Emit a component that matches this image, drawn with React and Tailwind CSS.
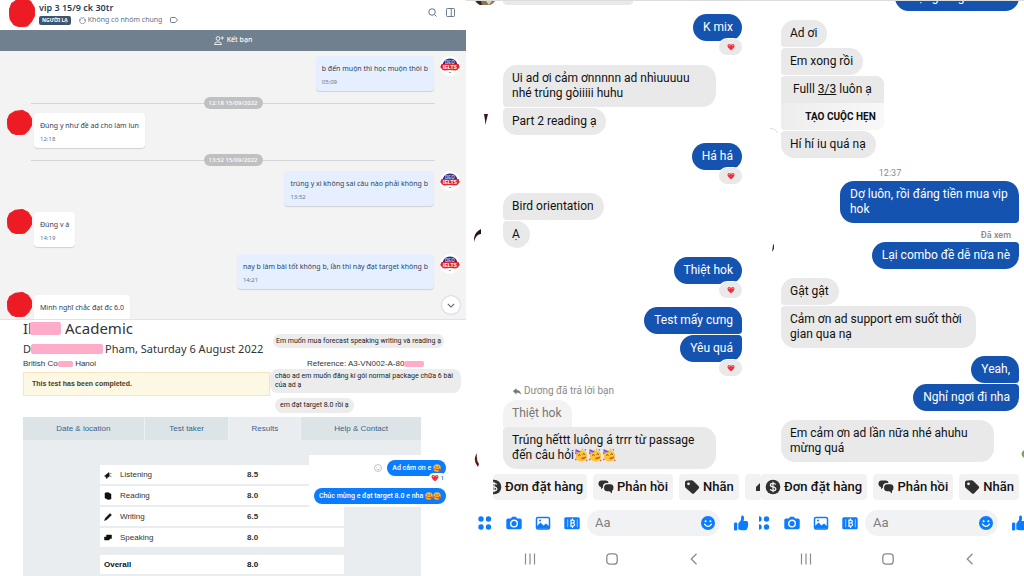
import React from "react";

/* ---------- shared drawings ---------- */

function RedMark({ className }) {
  return (
    <svg viewBox="0 0 24 24" className={className} preserveAspectRatio="none" aria-hidden="true">
      <path d="M8 1.2 L15 .5 L20 3 L23.3 8 L24 14 L21 19 L17 23 L10 24 L4.5 22 L1 17.5 L.2 10 L2.5 4.5 Z" fill="#ed1c24" stroke="#ed1c24" strokeLinejoin="round" />
    </svg>
  );
}

function BrandAvatar() {
  return (
    <svg viewBox="0 0 20 20" className="size-5 shrink-0" aria-hidden="true">
      <circle cx="10" cy="10" r="10" fill="#fff" />
      <path d="M2.500 8.500 Q4 2.500 10 2.500 Q16 2.500 17.500 8.500 Z" fill="#27307f" />
      <path d="M1.500 8 H18.500 L19.800 11 Q18 14.300 15 14.600 L10 14 L5 14.600 Q2 14.300 .200 11 Z" fill="#dc2633" />
      <text x="10" y="7.500" textAnchor="middle" fontSize="4.500" fontWeight="700" fill="#c9cdf0" fontFamily="Liberation Sans, sans-serif">DEO</text>
      <text x="10" y="13" textAnchor="middle" fontSize="5" fontWeight="700" fill="#fff" fontFamily="Liberation Sans, sans-serif">IELTS</text>
      <path d="M8.500 16 h3 l-1.500 1 z" fill="#777" />
    </svg>
  );
}

function Heart({ className }) {
  return (
    <svg viewBox="0 0 16 16" className={className} aria-hidden="true">
      <path d="M8 14.500 C4 11.500 1 8.500 1 5.300 C1 1.500 6 .500 8 4 C10 .500 15 1.500 15 5.300 C15 8.500 12 11.500 8 14.500Z" fill="#f0303f" />
      <ellipse cx="4.600" cy="4.600" rx="2" ry="1.500" fill="#ff8a90" />
      <ellipse cx="11.400" cy="4.600" rx="2" ry="1.500" fill="#ff8a90" />
    </svg>
  );
}

function PartyFace() {
  return (
    <svg viewBox="0 0 16 16" className="inline-block size-3.5 align-text-bottom" role="img" aria-label="party face">
      <circle cx="8.500" cy="9" r="6.500" fill="#fdc531" />
      <path d="M1 7 L2 1 L8 4 Z" fill="#7c5bc7" />
      <path d="M1.500 4.500 L5 5.500" stroke="#f4a6d7" />
      <path d="M4.800 8.500 q1.300-1.800 2.600 0 M9.800 7.500 q1.300-1.800 2.600 0" stroke="#5b3410" fill="none" />
      <path d="M8 11.500 L13.500 9.800 L14 11.300 L9 13 Z" fill="#e0503a" />
      <circle cx="13" cy="2" r="1" fill="#4a9de8" />
      <circle cx="2" cy="13" r="1" fill="#e64cae" />
      <circle cx="14.500" cy="14" r="1" fill="#e8663c" />
      <circle cx="10" cy="1.500" r=".8" fill="#f0a030" />
    </svg>
  );
}

function LoveFace() {
  return (
    <svg viewBox="0 0 16 16" className="inline-block size-2 align-middle" role="img" aria-label="smiling face with hearts">
      <circle cx="8" cy="8" r="7.500" fill="#fcb92d" />
      <path d="M4 6.500 q1.500-2 3 0 M9 6.500 q1.500-2 3 0 M4.500 10 q3.500 3.500 7 0" stroke="#6b3510" strokeWidth="1.400" fill="none" />
      <circle cx="13" cy="11.500" r="2.500" fill="#ec3b42" />
      <circle cx="2" cy="10" r="2" fill="#ec5a42" />
    </svg>
  );
}

/* ---------- desktop chat ---------- */

function DeskBubble({ text, time, mine }) {
  return (
    <div className={`rounded px-1.5 pt-2 pb-1 shadow-[0_1px_1px_rgba(0,0,0,0.14)] ${mine ? "bg-[#e5efff]" : "bg-white"}`}>
      <p className="text-[7px] leading-[10px] whitespace-nowrap text-[#2c4560]">{text}</p>
      <p className="mt-1 text-[6px] leading-[9px] text-[#66788a]">{time}</p>
    </div>
  );
}

function Mine({ text, time, className }) {
  return (
    <div className={`flex items-start justify-end gap-1.5 pr-1.5 ${className}`}>
      <DeskBubble text={text} time={time} mine />
      <BrandAvatar />
    </div>
  );
}

function Theirs({ text, time, className }) {
  return (
    <div className={`flex items-start pl-[7px] ${className}`}>
      <RedMark className="-mt-[3px] mr-[2px] size-[25px] shrink-0" />
      <DeskBubble text={text} time={time} />
    </div>
  );
}

function DayDivider({ children, className }) {
  return (
    <div className={`flex h-3 items-center pr-[31px] pl-[31px] ${className}`}>
      <span className="h-px flex-1 bg-[#d5d6d8]" />
      <span className="rounded-full bg-[#bfc0c1] px-[5px] text-[6px] leading-[12px] font-medium text-white">{children}</span>
      <span className="h-px flex-1 bg-[#d5d6d8]" />
    </div>
  );
}

function DeskChat() {
  return (
    <section className="relative bg-[#f3f3f3] font-['Noto_Sans',sans-serif]">
      <header className="flex h-[30px] items-start bg-white pl-[9px]">
        <RedMark className="-mt-0.5 h-[29px] w-[26px] shrink-0" />
        <div className="ml-1 flex-1">
          <h2 className="mt-0.5 text-[9px] leading-[12px] font-semibold text-[#24405c]">vip 3 15/9 ck 30tr</h2>
          <div className="flex items-center text-[7px] leading-[12px] text-[#5c7085]">
            <span className="rounded-xs bg-[#3c556d] px-[3px] text-[5px] leading-[9px] font-bold text-white">NGƯỜI LẠ</span>
            <svg viewBox="0 0 16 16" className="mr-0.5 ml-2 size-[7px]" fill="none" stroke="#5c7085" strokeWidth="1.600" aria-hidden="true">
              <path d="M5 3 A6.500 6.500 0 1 0 11 3 M4 1 l4 2 l4-2 M1 5 l2 3 M15 5 l-2 3" />
            </svg>
            <span>Không có nhóm chung</span>
            <svg viewBox="0 0 16 12" className="ml-2 h-[6px] w-2" fill="none" stroke="#5c7085" strokeWidth="1.800" aria-hidden="true">
              <path d="M3 1 H10.500 L15 6 L10.500 11 H3 Q1 11 1 9 V3 Q1 1 3 1 Z" />
            </svg>
          </div>
        </div>
        <button aria-label="Tìm kiếm" className="mt-2 mr-[9px]">
          <svg viewBox="0 0 18 18" className="size-[9px]" fill="none" stroke="#5c7085" strokeWidth="1.900" aria-hidden="true">
            <circle cx="8" cy="8" r="6.500" /><path d="M13 13 L17 17" />
          </svg>
        </button>
        <button aria-label="Thông tin" className="mt-2 mr-[11px]">
          <svg viewBox="0 0 18 18" className="size-[9px]" fill="none" stroke="#5c7085" strokeWidth="1.800" aria-hidden="true">
            <rect x="1" y="1" width="16" height="16" rx="1.500" /><path d="M10.500 1 V17" />
          </svg>
        </button>
      </header>
      <button className="flex h-[21px] w-full items-center justify-center gap-[3px] bg-[#71808e] text-[7px] font-medium text-white">
        <svg viewBox="0 0 20 18" className="h-[9px] w-2.5" fill="none" stroke="#fff" strokeWidth="1.700" aria-hidden="true">
          <circle cx="8" cy="5" r="3.800" /><path d="M1 17 Q1 11.500 8 11.500 Q15 11.500 15 17 Z M16.500 1 v6 M13.500 4 h6" />
        </svg>
        Kết bạn
      </button>
      <Mine className="mt-[5px]" text="b đến muộn thì học muộn thôi b" time="05:09" />
      <DayDivider className="mt-[6px]">12:18 15/09/2022</DayDivider>
      <Theirs className="mt-1" text="Đúng y như đề ad cho làm lun" time="12:18" />
      <DayDivider className="mt-[6px]">13:52 15/09/2022</DayDivider>
      <Mine className="mt-[5px]" text="trúng y xì không sai câu nào phải không b" time="13:52" />
      <Theirs className="mt-[6px]" text="Đúng v á" time="14:19" />
      <Mine className="mt-[7px]" text="nay b làm bài tốt không b, lần thi này đạt target không b" time="14:21" />
      <div className="h-[31px] overflow-hidden border-b border-[#e2e3e5] pt-[6px]">
        <Theirs text="Mình nghĩ chắc đạt đc 6.0" time="14:21" />
      </div>
      <button aria-label="Xuống cuối" className="absolute right-1.5 bottom-1.5 flex size-[18px] items-center justify-center rounded-full bg-white shadow-[0_0_2px_rgba(0,0,0,0.3)]">
        <svg viewBox="0 0 10 6" className="h-[5px] w-2" fill="none" stroke="#4c6075" strokeWidth="1.300" aria-hidden="true"><path d="M1 1 L5 5 L9 1" /></svg>
      </button>
    </section>
  );
}

/* ---------- result sheet ---------- */

function Redacted({ className }) {
  return <span className={`inline-block rounded-xs bg-[#ffaccb] ${className}`} />;
}

const scores = [
  ["Listening", "8.5", "M1 10 L10 3 V12 L1 10 Z M10 6 L15 5 M10 9 L15 11 M3 10 L5 15 L7 14 L6 11"],
  ["Reading", "8.0", "M2 2 L8 1 L14 4 V14 L8 15 L2 12 Z"],
  ["Writing", "6.5", "M1 15 L3 10 L12 1 L15 4 L6 13 Z"],
  ["Speaking", "8.0", "M5 2 H15 V9 H12 L10 12 H1 V6 H5 Z"],
];

const noteClass = "rounded-full bg-[#ececec] font-['Roboto',sans-serif] text-[7px] text-[#222]";

function ResultSheet() {
  return (
    <section className="relative flex flex-1 flex-col bg-white font-['Liberation_Sans',sans-serif]">
      <div className="flex h-[97px] items-start pl-[23px]">
        <div className="w-[247px] shrink-0 whitespace-nowrap text-[#333]">
          <h1 className="flex h-[17px] items-center font-['Noto_Sans',sans-serif] text-[15px] leading-[17px]">
            Il<Redacted className="mr-1 -ml-0.5 h-[13px] w-[31px]" /> Academic
          </h1>
          <p className="mt-1 flex h-4 items-center font-['Noto_Sans',sans-serif] text-[11px] leading-[16px]">
            D<Redacted className="mr-0.5 h-2.5 w-[72px]" /> Pham, Saturday 6 August 2022
          </p>
          <p className="mt-0.5 flex h-2.5 items-center text-[8px] leading-[10px]">
            British Cou<Redacted className="mr-0.5 -ml-1 h-1.5 w-[15px]" /> Hanoi
          </p>
          <p className="mt-[3px] border border-[#f5e6bf] bg-[#fdf8e3] px-2 text-[7px] leading-[22px] font-bold text-[#4a3d1c]">This test has been completed.</p>
        </div>
        <div className="flex flex-col items-start whitespace-nowrap">
          <p className={`mt-3.5 ml-[3px] px-[3px] leading-[14px] ${noteClass}`}>Em muốn mua forecast speaking writing và reading ạ</p>
          <p className="mt-[11px] ml-[37px] flex h-2.5 items-center text-[8px] leading-[10px] text-[#333]">
            Reference: A3-VN002-A-80<Redacted className="h-1.5 w-5" />
          </p>
          <p className="w-[191px] rounded-lg bg-[#ececec] py-[3px] pl-[5px] font-['Roboto',sans-serif] text-[7px] leading-[9px] whitespace-normal text-[#222]">
            chào ad em muốn đăng kí gói normal package chữa 6 bài của ad ạ
          </p>
          <p className={`mt-[5px] ml-[5px] px-[5px] leading-[15px] ${noteClass}`}>em đạt target 8.0 rồi ạ</p>
        </div>
      </div>
      <div className="mr-[45px] ml-[23px] flex-1 bg-[#e9edef]">
        <nav className="grid h-[23px] grid-cols-[121fr_84fr_71fr_120fr] gap-px bg-[#eef1f2] text-[8px] text-[#37648f]">
          <button className="bg-[#dde4e7]">Date &amp; location</button>
          <button className="bg-[#dde4e7]">Test taker</button>
          <button className="bg-[#e9edef]">Results</button>
          <button className="bg-[#dde4e7]">Help &amp; Contact</button>
        </nav>
        <div className="px-[77px] pt-[23px]">
          <table className="w-full table-fixed border-separate border-spacing-x-0 border-spacing-y-0.5 text-[8px] leading-[19px] text-[#333]">
            <colgroup>
              <col className="w-5" />
              <col className="w-[127px]" />
              <col />
            </colgroup>
            <tbody>
              {scores.map(([name, score, d]) => (
                <tr key={name} className="bg-white">
                  <td className="p-0 pl-1">
                    <svg viewBox="0 0 16 16" className="size-2" fill="#111" stroke="#111" aria-hidden="true"><path d={d} /></svg>
                  </td>
                  <td className="p-0">{name}</td>
                  <td className="p-0 font-bold">{score}</td>
                </tr>
              ))}
              <tr className="h-1"><td colSpan="3" className="p-0 leading-[4px]"></td></tr>
              <tr className="bg-white font-bold text-[#111]">
                <td colSpan="2" className="p-0 pl-1">Overall</td>
                <td className="p-0">8.0</td>
              </tr>
            </tbody>
          </table>
        </div>
      </div>
      <div className="absolute top-[135px] left-[309px] flex w-[137px] flex-col items-end bg-white font-['Roboto',sans-serif] text-[7px] font-medium whitespace-nowrap text-white">
        <div className="mt-[5px] flex items-center gap-[5px]">
          <svg viewBox="0 0 16 16" className="size-2" fill="none" stroke="#aaa" strokeWidth="1.400" aria-hidden="true"><circle cx="8" cy="8" r="7" /><path d="M5 6 v1 M11 6 v1 M5 10 q3 3 6 0" /></svg>
          <p className="relative rounded-lg bg-[#0a7cff] px-[5px] leading-[16px]">
            Ad cảm ơn e <LoveFace />
            <span className="absolute right-0 -bottom-1.5 flex items-center gap-0.5 rounded-full bg-white px-0.5 text-[6px] leading-[9px] text-[#0a7cff]"><Heart className="size-2" />1</span>
          </p>
        </div>
        <p className="mt-3 mb-[3px] rounded-lg bg-[#0a7cff] px-[5px] leading-[16px]">Chúc mừng e đạt target 8.0 e nha <LoveFace /><LoveFace /></p>
      </div>
    </section>
  );
}

/* ---------- phone chats ---------- */

function In({ children, className = "" }) {
  return <p className={`w-fit rounded-[14px] bg-[#e9e9e9] py-1.5 pr-2.5 pl-[9px] text-[12px] leading-[15px] text-[#111] ${className}`}>{children}</p>;
}

function Out({ children, className = "", liked }) {
  return (
    <p className={`relative ml-auto w-fit rounded-[14px] bg-[#1553b0] py-1.5 pr-[9px] pl-2.5 text-[12px] leading-[15px] text-white ${className}`}>
      {children}
      {liked && (
        <span className="absolute right-0 -bottom-3.5 flex h-4 w-[23px] items-center justify-center rounded-full bg-[#e9e9e9] ring-1 ring-white">
          <Heart className="size-2" />
        </span>
      )}
    </p>
  );
}

function CoinIcon() {
  return (
    <svg viewBox="0 0 16 16" className="size-4 shrink-0" aria-hidden="true">
      <circle cx="8" cy="8" r="7.300" fill="#303030" />
      <path d="M10.800 5.600 Q10.300 4.300 8 4.300 Q5.400 4.300 5.400 6 Q5.400 7.500 8 7.900 Q10.800 8.300 10.800 10 Q10.800 11.700 8 11.700 Q5.600 11.700 5.200 10.200 M8 2.700 V13.300" stroke="#f2f2f2" strokeWidth="1.200" fill="none" />
    </svg>
  );
}

function TalkIcon() {
  return (
    <svg viewBox="0 0 16 14" className="h-3.5 w-4 shrink-0" aria-hidden="true">
      <path d="M3 .500 H8 Q10.500 .800 10.500 3 H8.500 Q5 3.300 5 6.500 V7.500 L3 9.300 V7.300 Q.500 6.800 .500 4.300 V3 Q.800 .700 3 .500 Z" fill="#303030" />
      <path d="M9 4.200 H12.500 Q15.500 4.500 15.500 7.500 Q15.500 10 14 10.800 V13.500 L11.500 11.200 H9 Q6 11 6 7.700 Q6.200 4.500 9 4.200 Z" fill="#303030" />
    </svg>
  );
}

function TagIcon() {
  return (
    <svg viewBox="0 0 16 16" className="size-4 shrink-0" aria-hidden="true">
      <path d="M1 3.500 Q1 1.500 3 1.500 L7.500 1.300 Q8.500 1.300 9.300 2 L14.700 7.300 Q15.700 8.500 14.700 9.500 L10.200 14.300 Q9 15.300 7.800 14.300 L1.800 9 Q1 8.300 1 7.500 Z" fill="#303030" />
      <circle cx="4.500" cy="4.800" r="1.400" fill="#f2f2f2" />
    </svg>
  );
}

function GridIcon() {
  return (
    <svg viewBox="0 0 16 16" className="size-4 shrink-0" fill="#0a7cff" aria-hidden="true">
      <circle cx="4" cy="4" r="2.700" /><circle cx="11.500" cy="4" r="2.700" /><circle cx="4" cy="12" r="2.700" /><circle cx="11.500" cy="12" r="2.700" />
    </svg>
  );
}

function CameraIcon() {
  return (
    <svg viewBox="0 0 16 16" className="size-4" aria-hidden="true">
      <path d="M5 3.500 L6 1.800 H10 L11 3.500 H14 Q15.700 3.500 15.700 5 V12.500 Q15.700 14.200 14 14.200 H2 Q.300 14.200 .300 12.500 V5 Q.300 3.500 2 3.500 Z" fill="#0a7cff" />
      <circle cx="8" cy="8.600" r="3.300" fill="none" stroke="#fff" strokeWidth="1.400" />
    </svg>
  );
}

function PhotoIcon() {
  return (
    <svg viewBox="0 0 16 16" className="size-4" aria-hidden="true">
      <rect x="1.500" y="2.500" width="13" height="11.500" rx="1.500" fill="#fff" stroke="#0a7cff" strokeWidth="1.500" />
      <path d="M2 11 L5.500 7.500 L8.500 10.500 L11 8.500 L14.500 11.500 V13.500 H2 Z" fill="#0a7cff" />
      <circle cx="5" cy="5.500" r="1" fill="#0a7cff" />
    </svg>
  );
}

function MoneyIcon() {
  return (
    <svg viewBox="0 0 16 16" className="size-4" aria-hidden="true">
      <rect x=".3" y="2.300" width="15.400" height="11.900" rx="1.500" fill="#0a7cff" />
      <path d="M3.700 4.300 V12.200 M13.300 4.300 V12.200" stroke="#fff" strokeWidth=".6" />
      <path d="M6.300 5.200 H8.800 Q10.300 5.300 10.300 6.600 Q10.300 8 8.800 8 H6.900 M8.800 8 Q10.600 8.200 10.600 9.600 Q10.600 11.100 8.800 11.200 H6.300 M7 5.200 V11.200 M8.500 3.500 V5.200 M8.500 11.200 V13" stroke="#fff" strokeWidth="1.200" fill="none" />
    </svg>
  );
}

function SmileIcon() {
  return (
    <svg viewBox="0 0 16 16" className="size-3.5 shrink-0" aria-hidden="true">
      <circle cx="8" cy="8" r="8" fill="#0a7cff" />
      <circle cx="5.300" cy="6" r="1.200" fill="#fff" /><circle cx="10.700" cy="6" r="1.200" fill="#fff" />
      <path d="M4 9.300 Q8 14.500 12 9.300" stroke="#fff" strokeWidth="1.400" fill="none" strokeLinecap="round" />
    </svg>
  );
}

function ThumbIcon() {
  return (
    <svg viewBox="0 0 16 16" className="size-4 shrink-0" fill="#0a7cff" aria-hidden="true">
      <rect x="1" y="7.500" width="3.300" height="8" rx="1.200" />
      <path d="M5.300 8.500 L8 5 L8.200 1.500 Q8.500 .200 9.800 .500 Q11.500 1.200 11 4 L10.500 6 H13.700 Q15.500 6.500 15 8.300 Q15.600 9.500 14.900 10.700 Q15.200 12 14.300 12.900 Q14.300 15.200 12 15.200 H9 Q7 15.200 5.300 14.200 Z" />
    </svg>
  );
}

function Chip({ icon, children, className = "px-[5px]" }) {
  return (
    <button className={`flex h-[26px] shrink-0 items-center gap-[3px] rounded-sm bg-[#f2f2f2] text-[13px] font-medium whitespace-nowrap text-[#111] ${className}`}>
      {icon}
      {children}
    </button>
  );
}

function Composer({ cut }) {
  return (
    <div className={`flex h-[26px] items-center gap-[13px] overflow-hidden ${cut ? "pl-[3px]" : "pr-[7px] pl-3"}`}>
      <button aria-label="Thêm" className={`flex justify-end overflow-hidden ${cut ? "w-3" : "w-[15px]"}`}><GridIcon /></button>
      <button aria-label="Máy ảnh"><CameraIcon /></button>
      <button aria-label="Ảnh"><PhotoIcon /></button>
      <button aria-label="Thanh toán"><MoneyIcon /></button>
      <div className="-ml-[6px] flex h-[26px] min-w-0 flex-1 items-center rounded-full bg-[#f1f2f4] pr-[5px] pl-2">
        <input aria-label="Tin nhắn" placeholder="Aa" className="min-w-0 flex-1 bg-transparent text-[13px] text-[#333] outline-none placeholder:text-[#808080]" />
        <button aria-label="Biểu tượng cảm xúc"><SmileIcon /></button>
      </div>
      <button aria-label="Thích" className={`overflow-hidden ${cut ? "w-[13px]" : "w-4"}`}><ThumbIcon /></button>
    </div>
  );
}

function SystemNav({ className }) {
  return (
    <nav className={`mt-[17px] flex items-center gap-[70px] ${className}`}>
      <button aria-label="Gần đây"><svg viewBox="0 0 12 12" className="size-3" stroke="#8b8b8b" strokeWidth="1.200" aria-hidden="true"><path d="M1.500 .500 V11.500 M6 .500 V11.500 M10.500 .500 V11.500" /></svg></button>
      <button aria-label="Trang chủ"><svg viewBox="0 0 12 12" className="size-3" fill="none" stroke="#8b8b8b" strokeWidth="1.300" aria-hidden="true"><rect x=".8" y=".8" width="10.400" height="10.400" rx="3" /></svg></button>
      <button aria-label="Quay lại"><svg viewBox="0 0 12 12" className="size-3" fill="none" stroke="#8b8b8b" strokeWidth="1.300" aria-hidden="true"><path d="M8.500 .800 L3.300 6 L8.500 11.200" /></svg></button>
    </nav>
  );
}

function PhoneOne() {
  return (
    <section className="relative flex flex-col overflow-hidden bg-white">
      <div className="flex h-[5px] items-start overflow-hidden border-t border-[#dcdcdc] pl-[9px]">
        <svg viewBox="0 0 20 5" className="h-[5px] w-5" aria-hidden="true"><path d="M0 0 H20 Q17 5 10 5 Q3 5 0 0Z" fill="#8a7355" /><path d="M1 0 Q3 4 7 4.500 L6 0Z" fill="#3a2418" /><path d="M11 0 L14 4 L17 0Z" fill="#ddd0b5" /></svg>
        <span className="ml-2 h-1 w-[130px] rounded-b-full bg-[#e9e9e9]" />
      </div>
      <div className="flex flex-col pr-3.5 pl-[37px]">
        <Out className="mt-[9px]" liked>K mix</Out>
        <In className="mt-6 max-w-[213px] rounded-bl-sm">Ui ad ơi cảm ơnnnnn ad nhìuuuuu nhé trúng gòiiiii huhu</In>
        <In className="mt-px rounded-tl-sm">Part 2 reading ạ</In>
        <Out className="mt-2" liked>Há há</Out>
        <In className="mt-[23px] rounded-bl-sm">Bird orientation</In>
        <In className="mt-px rounded-tl-sm">Ạ</In>
        <Out className="mt-[9px]" liked>Thiệt hok</Out>
        <Out className="mt-[23px] rounded-br-sm">Test mấy cưng</Out>
        <Out className="mt-px rounded-tr-sm" liked>Yêu quá</Out>
        <p className="mt-[23px] flex items-center gap-[3px] pl-[10px] text-[10px] leading-[12px] text-[#8a8a8a]">
          <svg viewBox="0 0 16 14" className="h-[7px] w-2" fill="#777" aria-hidden="true"><path d="M7 0 V4 Q15 4 16 13 Q13 9 7 9 V13 L0 6.500 Z" /></svg>
          Dương đã trả lời bạn
        </p>
        <p className="mt-[3px] w-fit rounded-t-[14px] bg-[#f3f3f3] py-1.5 pr-2.5 pl-[9px] text-[12px] leading-[15px] text-[#777]">Thiệt hok</p>
        <In className="max-w-[213px] rounded-tl-sm">Trúng hếttt luông á trrr từ passage đến câu hỏi<PartyFace /><PartyFace /><PartyFace /></In>
      </div>
      <svg viewBox="0 0 4 11" className="absolute top-[114px] left-[18px] h-[11px] w-1" aria-hidden="true"><path d="M0 0 H4 L2.500 6 L1.500 11 L1 6 Z" fill="#3a1518" /></svg>
      <svg viewBox="0 0 8 13" className="absolute top-[229px] left-2 h-[13px] w-2" aria-hidden="true"><path d="M0 13 Q-1 4 7 0 V5 Q2 5 0 13Z" fill="#2a1412" /></svg>
      <svg viewBox="0 0 5 14" className="absolute top-[453px] left-2 h-3.5 w-[5px]" aria-hidden="true"><path d="M3 0 Q-2 7 4 14 L5 11 Q2 7 3 0Z" fill="#5a1a1a" /></svg>
      <div className="mt-[5px] flex gap-1.5 overflow-hidden pl-[27px]">
        <Chip className="pr-1" icon={<span className="flex w-[9px] justify-end overflow-hidden"><CoinIcon /></span>}>Đơn đặt hàng</Chip>
        <Chip icon={<TalkIcon />}>Phản hồi</Chip>
        <Chip icon={<TagIcon />}>Nhãn</Chip>
        <span className="h-[26px] w-4 shrink-0 rounded-l-sm bg-[#f2f2f2]" />
      </div>
      <div className="mt-2.5"><Composer /></div>
      <SystemNav className="pl-[58px]" />
    </section>
  );
}

function PhoneTwo() {
  return (
    <section className="relative flex flex-col overflow-hidden bg-white">
      <div className="flex h-[11px] flex-col justify-end overflow-hidden border-t border-[#dcdcdc] pr-[5px]">
        <Out>Chị nghỉ ngơi đi nha</Out>
      </div>
      <div className="flex flex-col pr-[5px] pl-[25px]">
        <In className="mt-[9px] rounded-bl-sm">Ad ơi</In>
        <In className="mt-px rounded-l-sm">Em xong rồi</In>
        <div className="mt-px w-fit overflow-hidden rounded-l-sm rounded-r-lg bg-[#e9e9e9]">
          <p className="px-3 py-1.5 text-[12px] leading-[15px] text-[#111]">Fulll <a href="#hen" className="underline">3/3</a> luôn ạ</p>
          <button className="block w-full bg-linear-to-r from-[#ededed] to-[#f8f8f8] pr-2 text-right text-[10px] leading-[27px] font-bold text-[#111]">TẠO CUỘC HẸN</button>
        </div>
        <In className="mt-px rounded-tl-sm">Hí hí iu quá nạ</In>
        <p className="mt-[9px] pr-5 text-center text-[9px] leading-[12px] text-[#8a8a8a]">12:37</p>
        <Out className="mt-0.5 max-w-[179px] rounded-br-sm">Dợ luôn, rồi đáng tiền mua vip hok</Out>
        <p className="mt-1.5 pr-2 text-right text-[9px] leading-[12px] font-medium text-[#8a8a8a]">Đã xem</p>
        <Out className="mt-px rounded-tr-sm">Lại combo đề dễ nữa nè</Out>
        <In className="mt-[9px] rounded-bl-sm">Gật gật</In>
        <In className="mt-px max-w-[195px] rounded-tl-sm">Cảm ơn ad support em suốt thời gian qua nạ</In>
        <Out className="mt-2 rounded-br-sm">Yeah,</Out>
        <Out className="mt-px rounded-tr-sm">Nghỉ ngơi đi nha</Out>
        <In className="mt-[9px] max-w-[213px]">Em cảm ơn ad lần nữa nhé ahuhu mừng quá</In>
      </div>
      <svg viewBox="0 0 8 6" className="absolute top-32 left-3.5 h-1.5 w-2" fill="none" stroke="#ddd" aria-hidden="true"><path d="M0 .500 Q5 0 7.500 5" /></svg>
      <svg viewBox="0 0 3 8" className="absolute top-[244px] left-4 h-2 w-[3px]" fill="#333" aria-hidden="true"><path d="M1 1 L2 0 V5 L0 8 Z" /></svg>
      <svg viewBox="0 0 3 8" className="absolute top-[450px] right-0 h-2 w-[3px]" fill="#78a843" aria-hidden="true"><path d="M3 0 Q-2 4 3 8 Z" /></svg>
      <div className="mt-3 flex gap-1.5 overflow-hidden pr-[5px]">
        <div className="flex flex-1">
          <span className="flex h-[26px] w-1 shrink-0 items-center bg-[#f2f2f2]">
            <svg viewBox="0 0 4 8" className="h-2 w-1" aria-hidden="true"><path d="M0 8 V4 L4 0 V8Z" fill="#303030" /></svg>
          </span>
          <Chip icon={<CoinIcon />}>Đơn đặt hàng</Chip>
        </div>
        <Chip icon={<TalkIcon />}>Phản hồi</Chip>
        <Chip icon={<TagIcon />}>Nhãn</Chip>
      </div>
      <div className="mt-2.5"><Composer cut /></div>
      <SystemNav className="pl-11" />
    </section>
  );
}

export default function App() {
  return (
    <main className="grid min-h-screen grid-cols-[minmax(0,466fr)_minmax(0,290fr)_minmax(0,268fr)] overflow-hidden bg-white font-['Roboto',sans-serif]">
      <div className="flex flex-col">
        <DeskChat />
        <ResultSheet />
      </div>
      <PhoneOne />
      <PhoneTwo />
    </main>
  );
}
